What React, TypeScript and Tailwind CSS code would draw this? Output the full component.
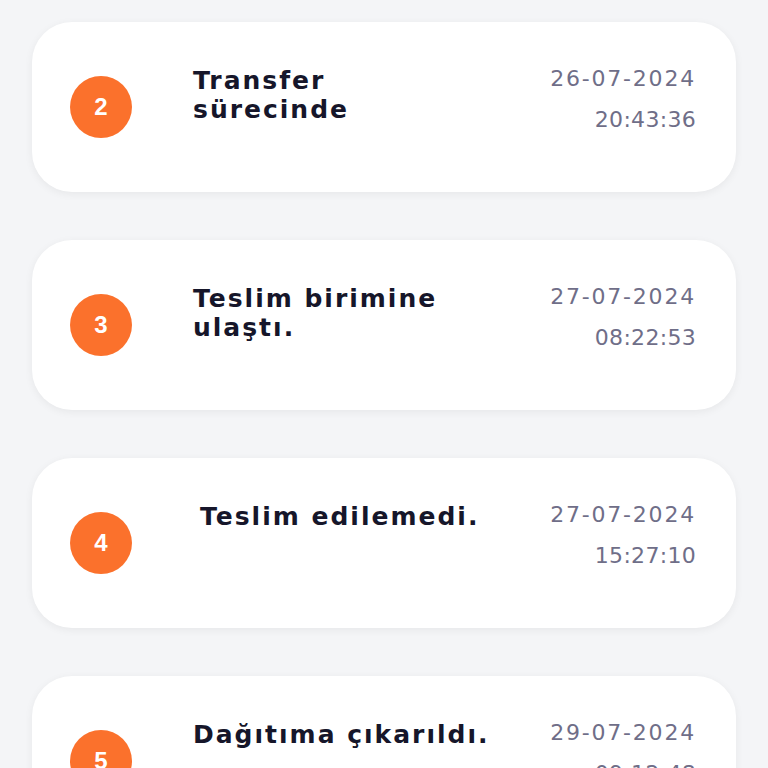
import React from 'react';

type Step = { no: number; title: string[]; date: string; time: string; indent?: boolean };

const steps: Step[] = [
  { no: 2, title: ['Transfer', 'sürecinde'], date: '26-07-2024', time: '20:43:36' },
  { no: 3, title: ['Teslim birimine', 'ulaştı.'], date: '27-07-2024', time: '08:22:53' },
  { no: 4, title: ['Teslim edilemedi.'], date: '27-07-2024', time: '15:27:10', indent: true },
  { no: 5, title: ['Dağıtıma çıkarıldı.'], date: '29-07-2024', time: '09:12:48' },
];

const StepCard: React.FC<{ step: Step }> = ({ step }) => (
  <div className="h-[170px] shrink-0 rounded-[40px] bg-white shadow-[0_2px_8px_rgba(0,0,0,0.06)] flex items-center pl-[38px] pr-[40px]">
    <div className="w-[62px] h-[62px] rounded-full bg-[#fb712c] flex items-center justify-center text-white text-[24px] font-bold font-['Liberation_Sans',sans-serif] shrink-0">
      {step.no}
    </div>
    <div className="flex-1 self-stretch flex pt-[44px] pl-[61px]">
      <div className={`flex-1 text-[#16162a] font-['DejaVu_Sans',sans-serif] font-bold text-[25px] leading-[29px] tracking-[2px] ${step.indent ? 'pl-[7px]' : ''}`}>
        {step.title.map((l) => (
          <div key={l}>{l}</div>
        ))}
      </div>
      <div className="flex flex-col items-end text-[#6f6e88] font-['DejaVu_Sans',sans-serif] text-[22px] leading-[41px] -mt-[8px]">
        <div className="tracking-[1.8px]">{step.date}</div>
        <div className="tracking-[0.3px]">{step.time}</div>
      </div>
    </div>
  </div>
);

export default function App() {
  return (
    <div className="w-[768px] h-[768px] overflow-hidden bg-[#f4f5f7] flex flex-col gap-[48px] pt-[22px] px-[32px]">
      {steps.map((s) => (
        <StepCard key={s.no} step={s} />
      ))}
    </div>
  );
}
